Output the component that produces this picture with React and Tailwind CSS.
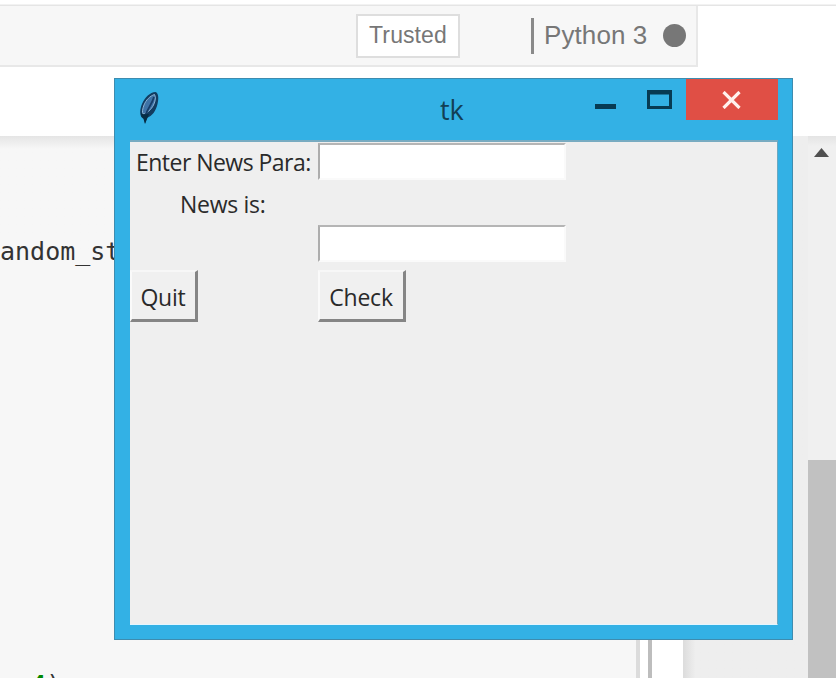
const uiFont = "font-['Open_Sans','Noto_Sans',sans-serif]";

function NotebookHeader() {
  return (
    <header className="h-[136px] shrink-0 bg-white pt-1">
      <div className="h-px bg-[#f2f2f2]" />
      <div className="h-px bg-[#e5e5e5]" />
      <div className="flex h-[61px] w-[698px] items-start border-r-2 border-b-2 border-[#e8e8e8] bg-[#f7f7f7] pt-2 font-['Liberation_Sans',Arial,sans-serif] text-[#777]">
        <div className="ml-[356px] flex h-[44px] w-[104px] items-center justify-center border-2 border-[#dedede] bg-white pb-[2px] text-[23px] tracking-[0.1px]">
          Trusted
        </div>
        <div className="mt-[4px] ml-[71px] h-[36px] w-[3px] bg-[#8a8a8a]" />
        <div className="mt-[3px] ml-[10px] text-[26px] leading-[36px] tracking-[0.1px] whitespace-nowrap">Python 3</div>
        <div className="mt-[10px] ml-[16px] size-[23px] shrink-0 rounded-full bg-[#777]" />
      </div>
    </header>
  );
}

function NotebookBody() {
  return (
    <main className="flex min-h-0 flex-1">
      <div className="flex w-[683px] shrink-0">
        <div className="flex h-full w-[636px] flex-col justify-between overflow-hidden bg-[#f7f7f7] font-['DejaVu_Sans_Mono',monospace] text-[25px] leading-[30px] text-[#333]">
          <div className="h-[131px] bg-linear-to-b from-[#e5e5e5] from-0% to-[#f7f7f7] to-10% pt-[101px]">andom_st</div>
          <div className="h-[8px] pl-[1px] whitespace-pre">
            .,<span className="font-bold text-[#080]">4</span>)
          </div>
        </div>
        <div className="w-[4px] bg-[#dcdcdc]" />
        <div className="w-[8px] bg-white" />
        <div className="w-[4px] bg-[#bdbdbd]" />
        <div className="flex-1 bg-white" />
      </div>
      <div className="w-[125px] bg-linear-to-r from-[#dcdcdc] to-[#eee] to-10%" />
      <div className="flex w-[28px] flex-col bg-[#f0f0f0]">
        <div className="h-[10px] bg-linear-to-b from-[#e4e4e4] to-[#f0f0f0]" />
        <svg className="ml-[6px] h-[12px] w-[15px]" viewBox="0 0 15 12">
          <path d="M0 11 7.5 2 15 11Z" fill="#505050" />
        </svg>
        <div className="mt-[302px] flex-1 bg-[#c1c1c1]" />
      </div>
    </main>
  );
}

function Feather() {
  return (
    <svg className="mt-[12px] ml-[23px] h-[34px] w-[22px]" viewBox="0 0 22 34">
      <path d="M17.500 1C12 1.500 7 6 4 13c-2 5-2.500 10-.5 13l2.500 1 1 5.500 2-5.500c5-2 9-7 10.500-14C21 7 20.500 2 17.500 1Z" fill="#123c60" />
      <path d="M16.500 3.500C12 5 8 9 6 14c-1.500 4-2 7-1 9 4-1 8-4 10.500-9 2-4 2.500-8 1-10.500Z" fill="#3f73a6" stroke="#8db4d6" strokeWidth="1" />
      <path d="M16 6C14 13 10 17 7 25" stroke="#173d68" strokeWidth="1.800" fill="none" />
      <path d="m3 22 3 1.500 5-.5-2 5-2 5-1.500-5-2-2Z" fill="#062d44" />
    </svg>
  );
}

function TitleBar() {
  return (
    <div className="flex h-[61px] items-start">
      <Feather />
      <div className="mt-[11px] ml-[280px] w-[27px] text-[27px] leading-[40px] text-[#123f55]">tk</div>
      <svg className="mt-[25px] ml-[128px] h-[5px] w-[21px]" viewBox="0 0 21 5">
        <path d="M0 0h21v5H0z" fill="#073b53" />
      </svg>
      <svg className="mt-[11px] ml-[31px] h-[19px] w-[25px]" viewBox="0 0 25 19">
        <path d="M0 0h25v19H0ZM3 4.500v11.500h19V4.500Z" fillRule="evenodd" fill="#073b53" />
      </svg>
      <div className="ml-[14px] flex h-[41px] w-[92px] items-center justify-center bg-[#e04f45] pr-[2px]">
        <svg className="h-[18px] w-[19px]" viewBox="0 0 19 18">
          <path d="m1.500 1 16 16m0-16-16 16" stroke="#fff1ed" strokeWidth="3.200" />
        </svg>
      </div>
    </div>
  );
}

function Entry() {
  return (
    <div className="h-[37px] w-[248px] border-t-2 border-r-2 border-b-2 border-l-2 border-t-[#b5b5b5] border-r-[#fafafa] border-b-[#fafafa] border-l-[#adadad] bg-white" />
  );
}

function TkButton({ children, className }) {
  return (
    <button
      className={`${className} flex h-[52px] items-center justify-center border-t-2 border-r-[3px] border-b-[3px] border-l-2 border-t-[#f7f7f7] border-r-[#858585] border-b-[#858585] border-l-[#fafafa] bg-[#f0f0f0] pt-[3px] pr-px tracking-[-0.2px] whitespace-nowrap`}
    >
      {children}
    </button>
  );
}

function TkWindow() {
  return (
    <section className={`${uiFont} absolute top-[78px] left-[114px] flex h-[562px] w-[679px] flex-col border border-[#3e8caf] bg-[#33b1e5]`}>
      <TitleBar />
      <div className="mr-[14px] ml-[15px] h-[485px] border border-t-2 border-l-0 border-t-[#78abc1] border-r-[#6ca8c0] border-b-[#e4f6ff] bg-[#efefef] text-[23px] text-[#2a2a2a]">
        <div className="grid grid-cols-[188px_1fr] grid-rows-[39px_43px_46px_52px]">
          <div className="pt-[3px] pl-[6px] leading-[34px] tracking-[-0.53px] whitespace-nowrap">Enter News Para:</div>
          <div className="pt-px"><Entry /></div>
          <div className="pt-[6px] pl-[50px] leading-[34px] tracking-[-0.3px] whitespace-nowrap">News is:</div>
          <div />
          <div />
          <div className="pt-px"><Entry /></div>
          <div><TkButton className="w-[68px]">Quit</TkButton></div>
          <div><TkButton className="w-[88px]">Check</TkButton></div>
        </div>
      </div>
    </section>
  );
}

export default function App() {
  return (
    <div className="relative flex h-[678px] w-[836px] flex-col overflow-hidden bg-white">
      <NotebookHeader />
      <NotebookBody />
      <TkWindow />
    </div>
  );
}
